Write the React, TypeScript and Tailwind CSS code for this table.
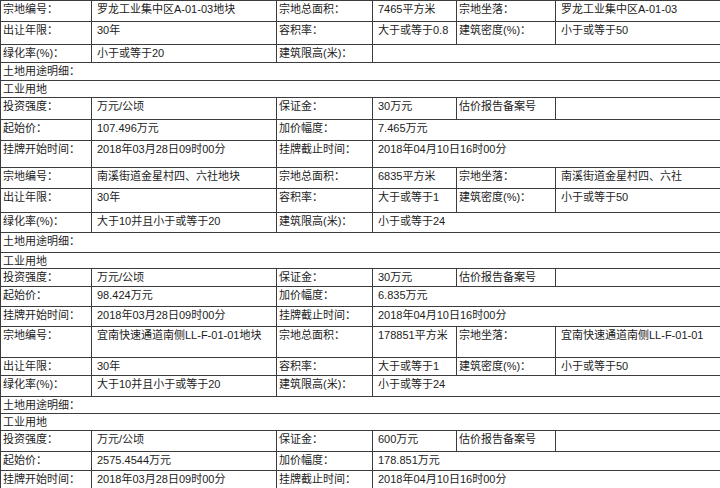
import React from "react"

type Cell = { text?: string; span?: number; label?: boolean }
type Row = { h: string; cells: Cell[] }

const parcels = [
  {
    no: "罗龙工业集中区A-01-03地块",
    area: "7465平方米",
    site: "罗龙工业集中区A-01-03",
    far: "大于或等于0.8",
    green: "小于或等于20",
    height: "",
    deposit: "30万元",
    start: "107.496万元",
    step: "7.465万元",
    hs: ["h-[21px]", "h-[23px]", "h-[18px]", "h-[18px]", "h-[17px]", "h-[22px]", "h-[21px]", "h-[27px]"],
  },
  {
    no: "南溪街道金星村四、六社地块",
    area: "6835平方米",
    site: "南溪街道金星村四、六社",
    far: "大于或等于1",
    green: "大于10并且小于或等于20",
    height: "小于或等于24",
    deposit: "30万元",
    start: "98.424万元",
    step: "6.835万元",
    hs: ["h-[21px]", "h-[24px]", "h-[20px]", "h-[20px]", "h-[16px]", "h-[18px]", "h-[20px]", "h-[20px]"],
  },
  {
    no: "宜南快速通道南侧LL-F-01-01地块",
    area: "178851平方米",
    site: "宜南快速通道南侧LL-F-01-01",
    far: "大于或等于1",
    green: "大于10并且小于或等于20",
    height: "小于或等于24",
    deposit: "600万元",
    start: "2575.4544万元",
    step: "178.851万元",
    hs: ["h-[31px]", "h-[18px]", "h-[21px]", "h-[17px]", "h-[17px]", "h-[21px]", "h-[19px]", "h-[18px]"],
  },
]

function buildRows(): Row[] {
  const rows: Row[] = []
  for (const p of parcels) {
    rows.push({
      h: p.hs[0],
      cells: [
        { text: "宗地编号：", label: true },
        { text: p.no },
        { text: "宗地总面积：", label: true },
        { text: p.area },
        { text: "宗地坐落：", label: true },
        { text: p.site },
      ],
    })
    rows.push({
      h: p.hs[1],
      cells: [
        { text: "出让年限：", label: true },
        { text: "30年" },
        { text: "容积率：", label: true },
        { text: p.far },
        { text: "建筑密度(%)：", label: true },
        { text: "小于或等于50" },
      ],
    })
    rows.push({
      h: p.hs[2],
      cells: [
        { text: "绿化率(%)：", label: true },
        { text: p.green },
        { text: "建筑限高(米)：", label: true },
        { text: p.height, span: 3 },
      ],
    })
    rows.push({ h: p.hs[3], cells: [{ text: "土地用途明细：", label: true, span: 6 }] })
    rows.push({ h: p.hs[4], cells: [{ text: "工业用地", label: true, span: 6 }] })
    rows.push({
      h: p.hs[5],
      cells: [
        { text: "投资强度：", label: true },
        { text: "万元/公顷" },
        { text: "保证金：", label: true },
        { text: p.deposit },
        { text: "估价报告备案号", label: true },
        { text: "" },
      ],
    })
    rows.push({
      h: p.hs[6],
      cells: [
        { text: "起始价：", label: true },
        { text: p.start },
        { text: "加价幅度：", label: true },
        { text: p.step, span: 3 },
      ],
    })
    rows.push({
      h: p.hs[7],
      cells: [
        { text: "挂牌开始时间：", label: true },
        { text: "2018年03月28日09时00分" },
        { text: "挂牌截止时间：", label: true },
        { text: "2018年04月10日16时00分", span: 3 },
      ],
    })
  }
  return rows
}

export default function App() {
  const rows = buildRows()
  return (
    <div className="h-[488px] w-[720px] overflow-hidden bg-white">
      <table
        className="w-[720px] table-fixed border-collapse text-[11px] leading-[14px] text-[#1c1c1c]"
        style={{ fontFamily: '"Liberation Sans", "Noto Sans CJK SC", sans-serif' }}
      >
        <colgroup>
          <col className="w-[91px]" />
          <col className="w-[185px]" />
          <col className="w-[96px]" />
          <col className="w-[84px]" />
          <col className="w-[99px]" />
          <col className="w-[165px]" />
        </colgroup>
        <tbody>
          {rows.map((row, i) => (
            <tr key={i} className={row.h}>
              {row.cells.map((c, j) => (
                <td
                  key={j}
                  colSpan={c.span}
                  className={
                    "border border-[#3c3c3c] align-top pt-px whitespace-nowrap overflow-hidden " +
                    (c.label ? "pl-[2px]" : "pl-[5px]")
                  }
                >
                  {c.text}
                </td>
              ))}
            </tr>
          ))}
        </tbody>
      </table>
    </div>
  )
}
